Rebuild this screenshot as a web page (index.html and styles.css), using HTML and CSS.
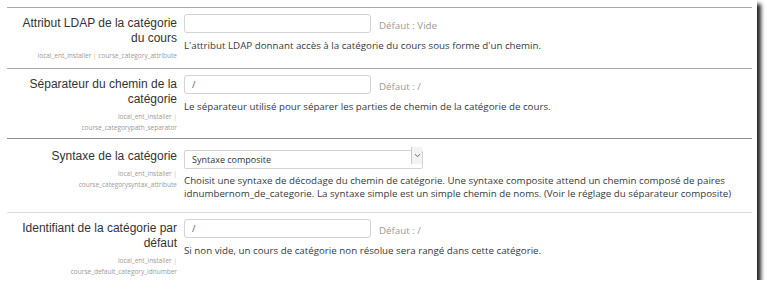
FILE: index.html
```html
<!DOCTYPE html>
<html lang="fr">
<head>
	<meta charset="UTF-8">
	<title>Réglages ENT installer</title>
	<link rel="stylesheet" href="styles.css">
</head>
<body>

	<div class="panel">
		<div class="setting">
			<div class="setting-label">
				<label for="id_category_attribute">Attribut LDAP de la catégorie du cours</label>
				<div class="meta">local_ent_installer <span class="sep">|</span> course_category_attribute</div>
			</div>
			<div class="setting-control">
				<div class="field-row">
					<input class="text-input" type="text" id="id_category_attribute" value="">
					<span class="default">Défaut : Vide</span>
				</div>
				<div class="desc">L'attribut LDAP donnant accès à la catégorie du cours sous forme d'un chemin.</div>
			</div>
		</div>

		<div class="setting">
			<div class="setting-label">
				<label for="id_path_separator">Séparateur du chemin de la catégorie</label>
				<div class="meta">local_ent_installer <span class="sep">|</span> course_categorypath_separator</div>
			</div>
			<div class="setting-control">
				<div class="field-row">
					<input class="text-input" type="text" id="id_path_separator" value="/">
					<span class="default">Défaut : /</span>
				</div>
				<div class="desc">Le séparateur utilisé pour séparer les parties de chemin de la catégorie de cours.</div>
			</div>
		</div>

		<div class="setting setting-select">
			<div class="setting-label">
				<label class="single" for="id_syntax">Syntaxe de la catégorie</label>
				<div class="meta">local_ent_installer <span class="sep">|</span> course_categorysyntax_attribute</div>
			</div>
			<div class="setting-control">
				<div class="field-row">
					<span class="select-wrap">
						<select class="select" id="id_syntax">
							<option selected>Syntaxe composite</option>
							<option>Syntaxe simple</option>
						</select>
						<span class="select-arrow">
							<svg width="7" height="5" viewBox="0 0 7 5"><path d="M1 1.2 L3.5 3.6 L6 1.2" fill="none" stroke="#666" stroke-width="1"/></svg>
						</span>
					</span>
				</div>
				<div class="desc">Choisit une syntaxe de décodage du chemin de catégorie. Une syntaxe composite attend un chemin composé de paires idnumbernom_de_categorie. La syntaxe simple est un simple chemin de noms. (Voir le réglage du séparateur composite)</div>
			</div>
		</div>

		<div class="setting setting-last">
			<div class="setting-label">
				<label for="id_default_idnumber">Identifiant de la catégorie par défaut</label>
				<div class="meta">local_ent_installer <span class="sep">|</span> course_default_category_idnumber</div>
			</div>
			<div class="setting-control">
				<div class="field-row">
					<input class="text-input" type="text" id="id_default_idnumber" value="/">
					<span class="default">Défaut : /</span>
				</div>
				<div class="desc">Si non vide, un cours de catégorie non résolue sera rangé dans cette catégorie.</div>
			</div>
		</div>
	</div>

</body>
</html>
```

FILE: styles.css
```css
* {
	margin: 0;
	padding: 0;
	box-sizing: border-box;
}
body {
	background: #fff;
	font-family: "Open Sans", "DejaVu Sans", sans-serif;
	color: #373a3c;
}
.panel {
	width: 757px;
	height: 280px;
	padding: 7px 5px 0 7px;
	background: #fff;
	box-shadow: 4px 4px 4px rgba(0, 0, 0, .85);
}
.setting {
	display: grid;
	grid-template-columns: 170px 1fr;
	column-gap: 7px;
	align-items: start;
	border-top: 1px solid #a9a9a9;
	padding-top: 6px;
}
.setting-select {
	border-top-color: #8f8f8f;
}
.setting-last {
	border-top-color: #dcdcdc;
}
.setting-label {
	padding: 2px 0 5px 15px;
	text-align: right;
}
.setting-label label {
	display: block;
	font-family: "Liberation Sans", Arial, sans-serif;
	font-size: 12px;
	line-height: 15px;
	color: #333;
}
.setting-label label.single {
	padding-top: 2px;
}
.meta {
	margin-top: 4px;
	font-size: 6.5px;
	line-height: 11px;
	color: #9a9a9a;
}
.meta .sep {
	color: #f0b27a;
}
.setting-control {
	padding-bottom: 16px;
}
.setting-select .setting-control {
	padding-bottom: 12px;
}
.field-row {
	display: flex;
	align-items: center;
	gap: 8px;
}
.text-input {
	width: 187px;
	height: 19px;
	border: 1px solid #d3d3d3;
	border-radius: 3px;
	padding: 0 7px;
	font-family: "Open Sans", sans-serif;
	font-size: 9.5px;
	color: #555;
	background: #fff;
	outline: none;
}
.default {
	padding-top: 3px;
	font-size: 9.75px;
	color: #999;
}
.select-wrap {
	position: relative;
	display: block;
	width: 239px;
	height: 19px;
	margin-top: 1px;
}
.select {
	appearance: none;
	-webkit-appearance: none;
	width: 100%;
	height: 100%;
	border: 1px solid #d3d3d3;
	border-radius: 2px;
	padding: 0 7px;
	font-family: "Open Sans", sans-serif;
	font-size: 9px;
	color: #333;
	background: #fff;
}
.select-arrow {
	position: absolute;
	top: 1px;
	right: 1px;
	width: 11px;
	height: 17px;
	display: flex;
	align-items: center;
	justify-content: center;
	border-left: 1px solid #c8c8c8;
	background: #f3f3f3;
	pointer-events: none;
}
.desc {
	margin-top: 6px;
	font-size: 9.75px;
	line-height: 13px;
}
.setting-select .desc {
	margin-top: 9px;
}
```
